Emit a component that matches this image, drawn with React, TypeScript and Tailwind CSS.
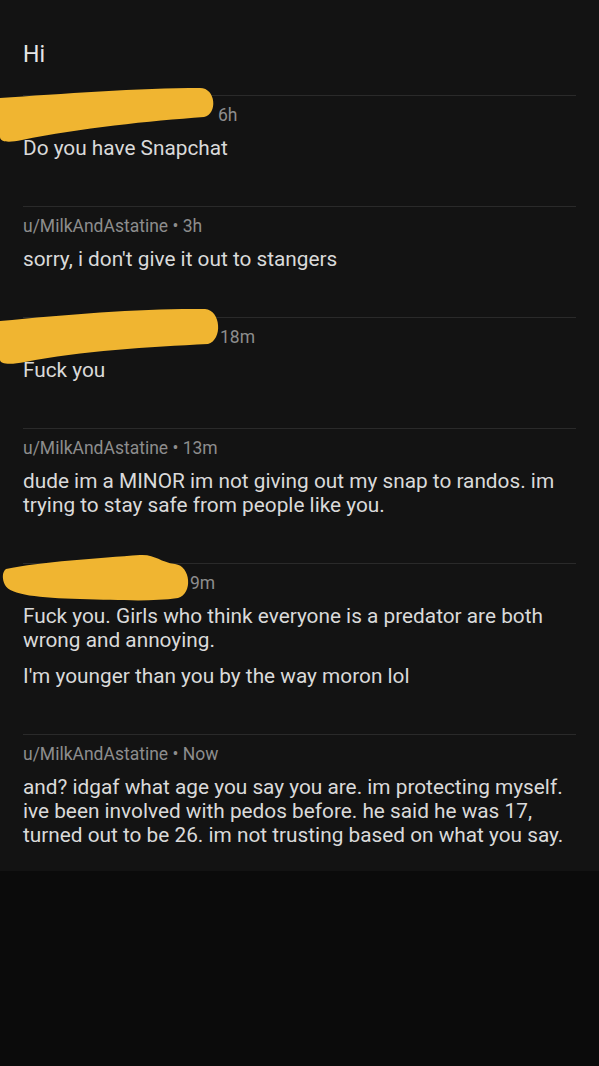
const font = { fontFamily: "Roboto, 'Liberation Sans', sans-serif" };

type Msg = {
  author?: string;
  time: string;
  hidden?: number;
  scribble?: string;
  paras: string[];
};

const messages: Msg[] = [
  {
    time: "6h",
    hidden: 195,
    scribble:
      "M0,14 C60,10 140,4 200,4 C216,4 218,30 204,33 C150,37 80,44 22,56 C8,59 0,58 0,53 Z",
    paras: ["Do you have Snapchat"],
  },
  {
    author: "u/MilkAndAstatine",
    time: "3h",
    paras: ["sorry, i don't give it out to stangers"],
  },
  {
    time: "18m",
    hidden: 197,
    scribble:
      "M0,15 C70,8 150,2 205,3 C221,4 223,34 208,38 C150,41 80,45 25,56 C10,59 0,58 0,54 Z",
    paras: ["Fuck you"],
  },
  {
    author: "u/MilkAndAstatine",
    time: "13m",
    paras: [
      "dude im a MINOR im not giving out my snap to randos. im trying to stay safe from people like you.",
    ],
  },
  {
    time: "9m",
    hidden: 167,
    scribble:
      "M6,17 C40,10 100,6 140,3 C155,2 160,10 175,12 C191,14 193,42 178,46 C150,50 120,48 80,47 C40,46 10,43 5,33 C2,27 2,20 6,17 Z",
    paras: [
      "Fuck you. Girls who think everyone is a predator are both wrong and annoying.",
      "I'm younger than you by the way moron lol",
    ],
  },
  {
    author: "u/MilkAndAstatine",
    time: "Now",
    paras: [
      "and? idgaf what age you say you are. im protecting myself. ive been involved with pedos before. he said he was 17, turned out to be 26. im not trusting based on what you say.",
    ],
  },
];

function Message({ m, last }: { m: Msg; last: boolean }) {
  return (
    <div className={`relative border-t border-[#2a2a2a] pt-[10px] ${last ? "pb-[24px]" : "pb-[46px]"}`}>
      {m.scribble && (
        <svg
          className="absolute left-[-23px] top-[-12px]"
          width="230"
          height="64"
          viewBox="0 0 230 64"
        >
          <path d={m.scribble} fill="#f0b531" />
        </svg>
      )}
      <div className="h-[19px] text-[17.5px] leading-[19px] text-[#8d8d8d]">
        {m.author ? (
          <span>
            {m.author} • {m.time}
          </span>
        ) : (
          <span style={{ marginLeft: m.hidden }}>{m.time}</span>
        )}
      </div>
      <div className="mt-[11px] flex flex-col gap-[12px] text-[20.8px] leading-[24px] text-[#dadada]">
        {m.paras.map((p, i) => (
          <p key={i}>{p}</p>
        ))}
      </div>
    </div>
  );
}

export default function App() {
  return (
    <div className="min-h-[1066px] w-[599px] bg-[#0b0b0b]" style={font}>
      <div className="bg-[#131313] pl-[23px] pr-[23px] pt-[43px]">
        <p className="pb-[28px] text-[23px] leading-[24px] text-[#e6e6e6]">Hi</p>
        {messages.map((m, i) => (
          <Message key={i} m={m} last={i === messages.length - 1} />
        ))}
      </div>
    </div>
  );
}
